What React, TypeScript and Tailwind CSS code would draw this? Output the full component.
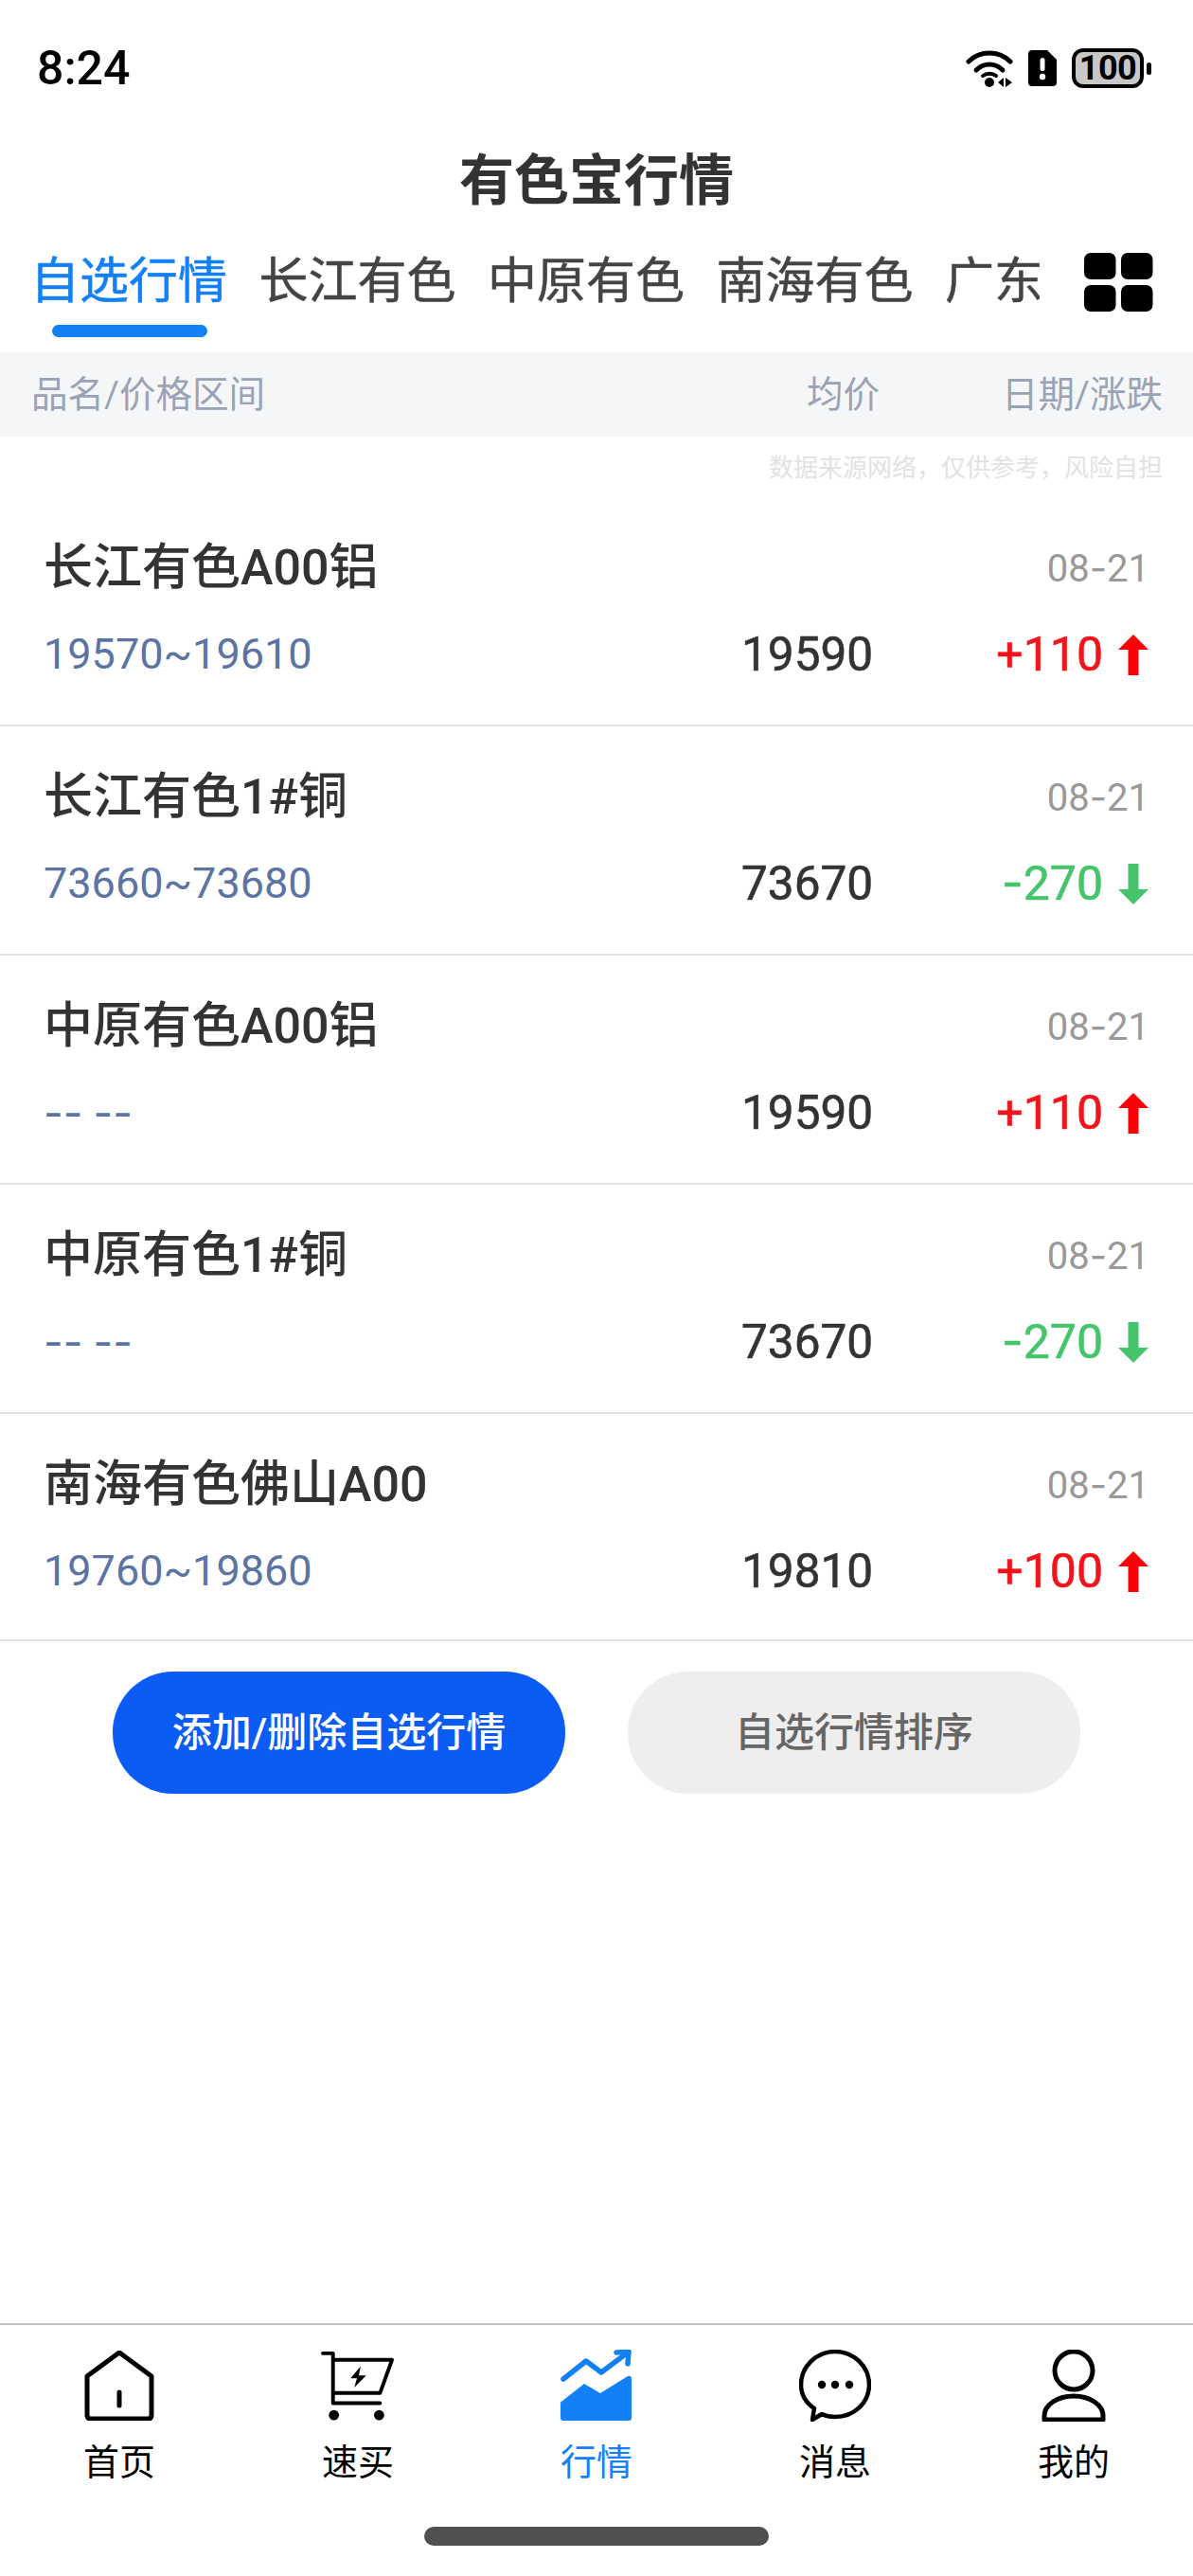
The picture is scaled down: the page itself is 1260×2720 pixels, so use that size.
const tabs = ["自选行情", "长江有色", "中原有色", "南海有色", "广东有色"];

interface Quote {
  name: string;
  range: string;
  avg: string;
  change: string;
  up: boolean;
}

const quotes: Quote[] = [
  { name: "长江有色A00铝", range: "19570~19610", avg: "19590", change: "+110", up: true },
  { name: "长江有色1#铜", range: "73660~73680", avg: "73670", change: "-270", up: false },
  { name: "中原有色A00铝", range: "-- --", avg: "19590", change: "+110", up: true },
  { name: "中原有色1#铜", range: "-- --", avg: "73670", change: "-270", up: false },
  { name: "南海有色佛山A00", range: "19760~19860", avg: "19810", change: "+100", up: true },
];

// the hyphens in the picture are wider than Roboto's, Inter's are close
function Dashed({ text }: { text: string }) {
  return (
    <>
      {text.split("").map((c, i) =>
        c === "-" ? (
          <span key={i} className="[font-family:Inter,sans-serif]">
            -
          </span>
        ) : (
          c
        )
      )}
    </>
  );
}

function WifiIcon() {
  return (
    <svg width="50" height="42" viewBox="0 0 50 42" fill="none">
      <path d="M3 14C15 2 35 2 47 14" stroke="#000" strokeWidth="5" strokeLinecap="round" />
      <path d="M11 23C19 15 31 15 39 23" stroke="#000" strokeWidth="5" strokeLinecap="round" />
      <path d="M18 29C22 26 28 26 32 29" stroke="#000" strokeWidth="4" strokeLinecap="round" />
      <circle cx="25" cy="36" r="5" fill="#000" />
      <path d="M34 36L40 31V41ZM42 31L49 36L42 41Z" fill="#000" />
    </svg>
  );
}

function SimIcon() {
  return (
    <svg width="30" height="38" viewBox="0 0 30 38">
      <path d="M4 0H20L30 10V34Q30 38 26 38H4Q0 38 0 34V4Q0 0 4 0Z" fill="#000" />
      <rect x="12.5" y="8" width="5" height="14" rx="2.5" fill="#fff" />
      <circle cx="15" cy="28" r="3.2" fill="#fff" />
    </svg>
  );
}

function Battery() {
  return (
    <div className="flex items-center gap-[3px]">
      <div className="flex h-[42px] w-[76px] items-center justify-center rounded-[12px] border-[4px] border-black bg-[#c8c8c8] text-[36px] font-bold tracking-[-0.5px] text-black">
        100
      </div>
      <div className="h-[13px] w-[5px] rounded-full bg-black" />
    </div>
  );
}

function GridIcon() {
  return (
    <svg width="73" height="62" viewBox="0 0 73 62" fill="#000">
      <rect x="0" y="0" width="33.5" height="28" rx="7" />
      <rect x="39" y="0" width="33.5" height="28" rx="7" />
      <rect x="0" y="34" width="33.5" height="28" rx="7" />
      <rect x="39" y="34" width="33.5" height="28" rx="7" />
    </svg>
  );
}

function Arrow({ up }: { up: boolean }) {
  return (
    <svg width="32" height="43" viewBox="0 0 32 43" className="ml-[16px]" fill={up ? "#fb0006" : "#46c46c"}>
      {up ? <path d="M16 0L32 16H21.5V43H10.5V16H0Z" /> : <path d="M16 43L32 27H21.5V0H10.5V27H0Z" />}
    </svg>
  );
}

function HomeIcon() {
  return (
    <svg width="74" height="74" viewBox="0 0 74 74" fill="none" stroke="#000" strokeWidth="5" strokeLinejoin="round" strokeLinecap="round">
      <path d="M3 27L37 2L71 27V68Q71 72 67 72H7Q3 72 3 68Z" />
      <path d="M37 44V58" strokeWidth="5" />
    </svg>
  );
}

function CartIcon() {
  return (
    <svg width="80" height="74" viewBox="18 14 82 76" fill="none" stroke="#000" strokeWidth="4" strokeLinecap="round" strokeLinejoin="round">
      <path d="M21 17H32V71H83" />
      <path d="M33 24H96L83 60H33" />
      <circle cx="33" cy="84" r="5.5" fill="#000" stroke="none" />
      <circle cx="82" cy="84" r="5.5" fill="#000" stroke="none" />
      <path d="M62 31L51 44H58L55 54L68 41H60Z" fill="#000" stroke="none" />
    </svg>
  );
}

function TrendIcon() {
  return (
    <svg width="76" height="76" viewBox="22 15 76 76" fill="none">
      <path d="M22 71Q22 70 24 69L47 51L64 61L93 43Q97 42 97 46V87Q97 90 94 90H25Q22 90 22 87Z" fill="#1480f5" />
      <path d="M25 46L49 27L65 39L93 18" stroke="#1480f5" strokeWidth="5.5" strokeLinecap="round" strokeLinejoin="round" />
      <path d="M81 18L94 17L93 30" stroke="#1480f5" strokeWidth="5.5" strokeLinecap="round" strokeLinejoin="round" />
    </svg>
  );
}

function MessageIcon() {
  return (
    <svg width="76" height="76" viewBox="0 0 76 76" fill="none" stroke="#000" strokeWidth="4.5">
      <path d="M38 2C58 2 74 18 74 37C74 56 58 71 38 71C33 71 28 70 24 68L14 74L16 62C7 56 2 47 2 37C2 18 18 2 38 2Z" strokeLinejoin="round" />
      <circle cx="24" cy="37" r="4.2" fill="#000" stroke="none" />
      <circle cx="38" cy="37" r="4.2" fill="#000" stroke="none" />
      <circle cx="53" cy="37" r="4.2" fill="#000" stroke="none" />
    </svg>
  );
}

function UserIcon() {
  return (
    <svg width="68" height="76" viewBox="0 0 68 76" fill="none" stroke="#000" strokeWidth="5">
      <ellipse cx="34" cy="22" rx="20" ry="20" />
      <path d="M3 74V70C3 58 17 49 34 49C51 49 65 58 65 70V74Z" strokeLinejoin="round" />
    </svg>
  );
}

const navItems = [
  { label: "首页", icon: <HomeIcon />, active: false },
  { label: "速买", icon: <CartIcon />, active: false },
  { label: "行情", icon: <TrendIcon />, active: true },
  { label: "消息", icon: <MessageIcon />, active: false },
  { label: "我的", icon: <UserIcon />, active: false },
];

export default function App() {
  return (
    <div className="flex h-[2720px] w-[1260px] flex-col overflow-hidden bg-white [font-family:Roboto,'Noto_Sans_CJK_SC',sans-serif]">
      {/* status bar */}
      <div className="flex h-[142px] items-start justify-between pl-[39px] pr-[44px] pt-[46px]">
        <span className="text-[50px] font-medium leading-[52px] text-black">8:24</span>
        <div className="flex items-center gap-[16px] pt-[5px]">
          <WifiIcon />
          <SimIcon />
          <Battery />
        </div>
      </div>

      {/* title */}
      <div className="flex h-[98px] items-center justify-center text-[58px] font-bold text-[#333]">有色宝行情</div>

      {/* tabs */}
      <div className="flex h-[132px] items-start">
        <div className="flex w-[1098px] gap-[33.5px] overflow-hidden whitespace-nowrap pl-[32px] pt-[30px]">
          {tabs.map((t, i) => (
            <div key={t} className="relative h-[90px] shrink-0">
              <span className={`text-[52px] leading-[56px] ${i === 0 ? "text-[#1480f5]" : "text-[#444]"} [-webkit-text-stroke:0.5px]`}>{t}</span>
              {i === 0 && <div className="absolute left-[23px] top-[73px] h-[13px] w-[164px] rounded-full bg-[#1480f5]" />}
            </div>
          ))}
        </div>
        <div className="ml-[47px] pt-[27px]">
          <GridIcon />
        </div>
      </div>

      {/* column header */}
      <div className="flex h-[89px] items-center bg-[#f5f6f8] text-[38.5px] text-[#9aa3b5]">
        <span className="flex-1 pl-[33px]">品名/价格区间</span>
        <span className="w-[206px]">均价</span>
        <span className="pr-[32px]">日期/涨跌</span>
      </div>
      <div className="flex h-[64px] justify-end pr-[32px] pt-[18px] text-[26px] leading-[30px] text-[#e2e2e2]">
        数据来源网络，仅供参考，风险自担
      </div>

      {/* rows */}
      {quotes.map((q, i) => (
        <div
          key={q.name}
          className={`border-b-[2px] border-[#e3e3e3] pl-[46px] pr-[47px] pt-[45px] ${i === 4 ? "h-[240px]" : "h-[242px]"}`}
        >
          <div className="flex h-[60px] items-center justify-between">
            <span className="text-[52px] font-medium text-[#333]">{q.name}</span>
            <span className="-mr-[1px] text-[40px] text-[#999]">
              <Dashed text="08-21" />
            </span>
          </div>
          <div className="mt-[31px] flex h-[60px] items-center">
            <span className="flex-1 text-[45px] text-[#5b74a3]">
              <Dashed text={q.range} />
            </span>
            <span className="w-[139px] text-right text-[49.5px] text-[#333] [-webkit-text-stroke:0.6px_#333]">{q.avg}</span>
            <div className="flex w-[291px] items-center justify-end">
              <span className={`text-[50px] [-webkit-text-stroke:0.6px] ${q.up ? "text-[#f1141c]" : "text-[#46c46c]"}`}>
                <Dashed text={q.change} />
              </span>
              <Arrow up={q.up} />
            </div>
          </div>
        </div>
      ))}

      {/* actions */}
      <div className="flex justify-center gap-[66px] pt-[32px]">
        <button className="h-[129px] w-[478px] rounded-[64px] bg-[#0b5cf5] text-[42px] font-medium text-white">添加/删除自选行情</button>
        <button className="h-[129px] w-[478px] rounded-[64px] bg-[#eeeeee] text-[42px] font-medium text-[#666]">自选行情排序</button>
      </div>

      <div className="flex-1" />

      {/* bottom nav */}
      <div className="h-[267px] border-t-[2px] border-[#c4c4c4]">
        <div className="grid grid-cols-5 pt-[25px]">
          {navItems.map((n) => (
            <div key={n.label} className="flex flex-col items-center">
              <div className="flex h-[78px] items-center justify-center">{n.icon}</div>
              <span className={`mt-[18px] text-[38px] leading-[48px] ${n.active ? "text-[#1480f5]" : "text-black"}`}>{n.label}</span>
            </div>
          ))}
        </div>
        <div className="mx-auto mt-[44px] h-[20px] w-[364px] rounded-full bg-[#505050]" />
      </div>
    </div>
  );
}
